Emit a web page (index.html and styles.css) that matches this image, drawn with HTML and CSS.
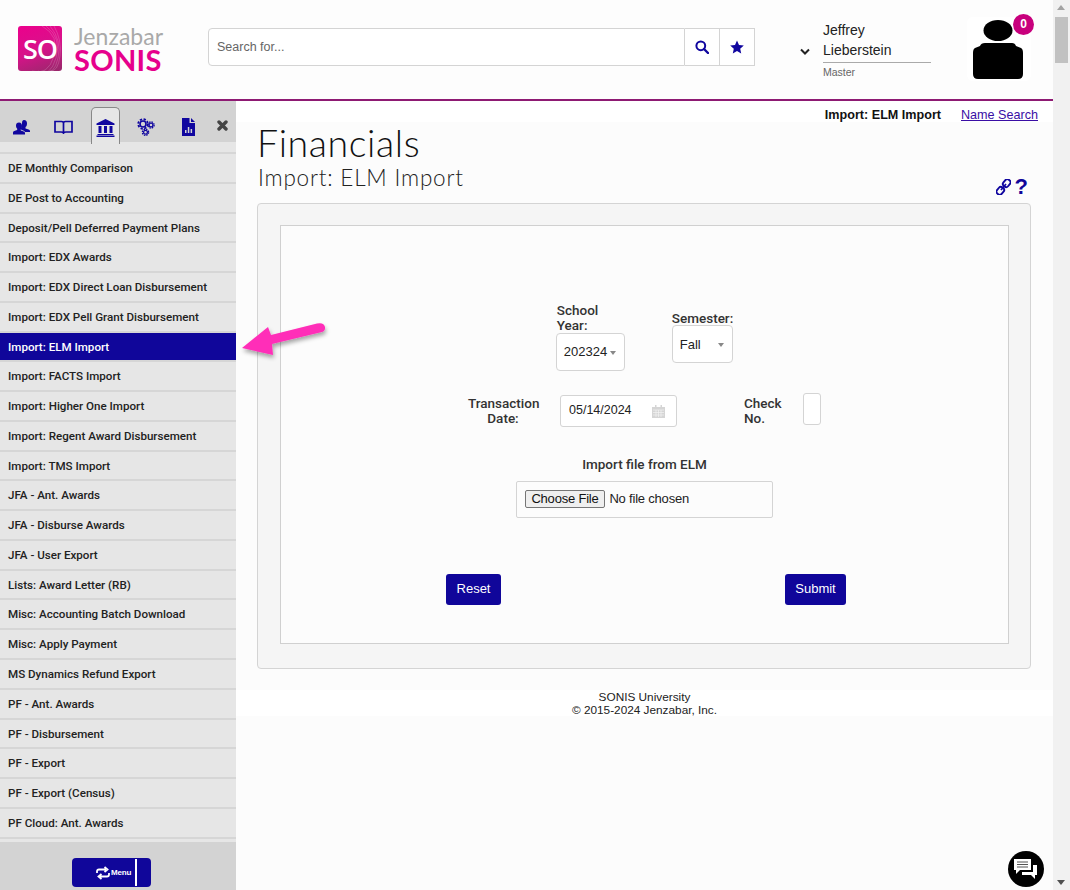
FILE: index.html
```html
<!DOCTYPE html>
<html lang="en">
<head>
  <meta charset="UTF-8" />
  <title>Import: ELM Import</title>
  <link rel="stylesheet" href="styles.css">
</head>
<body>
  <div class="page">
    <!-- TOP BAR -->
    <header class="top-bar">
      <div class="logo">
        <div class="logo-mark">
          <svg class="logo-swirl" width="44" height="45" viewBox="0 0 44 45"><g fill="none" stroke="#fff" stroke-opacity=".35" stroke-width=".5"><path d="M24 0q18 10 12 30T14 45"/><path d="M28 0q16 12 10 32T20 45"/><path d="M32 0q12 14 8 32T26 45"/><path d="M36 0q8 14 6 30T32 45"/></g></svg>
          <span>SO</span>
        </div>
        <div class="logo-words">
          <div class="logo-jenzabar">Jenzabar</div>
          <div class="logo-sonis">SONIS</div>
        </div>
      </div>
      <div class="search">
        <div class="search-input">Search for...</div>
        <div class="search-btn">
          <svg width="14" height="14" viewBox="0 0 14 14"><circle cx="5.8" cy="5.8" r="4.4" fill="none" stroke="#10069f" stroke-width="2"/><path d="M9 9l4 4" stroke="#10069f" stroke-width="2.4" stroke-linecap="round"/></svg>
        </div>
        <div class="search-btn star-btn">
          <svg width="14" height="14" viewBox="0 0 14 14"><path d="M7 .6l2 4.4 4.8.5-3.6 3.2 1 4.7L7 11l-4.2 2.4 1-4.7L.2 5.5 5 5z" fill="#10069f"/></svg>
        </div>
      </div>
      <div class="user">
        <svg class="user-caret" width="10" height="7" viewBox="0 0 10 7"><path d="M1 1.5l4 4 4-4" fill="none" stroke="#222" stroke-width="2"/></svg>
        <div class="user-info">
          <div class="user-name">Jeffrey<br>Lieberstein</div>
          <div class="user-role">Master</div>
        </div>
      </div>
      <div class="avatar">
        <svg width="64" height="64" viewBox="0 0 64 64"><ellipse cx="31" cy="13.500" rx="14.500" ry="10.500" fill="#000"/><path d="M18 26h27q3 0 4 3l5 2q2 1 2 5v21q0 5-5 5H11q-5 0-5-5V36q0-4 2-5l5-2q1-3 5-3z" fill="#000"/></svg>
        <span class="badge">0</span>
      </div>
    </header>

    <div class="layout">
      <!-- SIDE MENU -->
      <aside class="side-menu">
        <div class="tabs">
          <span class="tab tab-users">
            <svg width="18" height="16" viewBox="0 0 18 16"><path d="M11 1c2 0 3 1.500 3 3.500 0 1.500-.5 3-1.500 3.500v1.500c2 .5 4.500 1 4.500 2.500v1H12c-.5-1.500-3-2-4-2.500V9c1-1 1-3 1-4.500C9 2.500 9.500 1 11 1z" fill="#10069f"/><path d="M6 3.500c2 0 3 1.500 3 3.500 0 1.500-.5 2.500-1.200 3.200v1.300c2 .8 4.200 1 4.200 2.500v1.500H0V13.500c0-1.500 2.200-1.700 4.200-2.500v-1.300C3.500 9 3 8 3 6.500c0-1.800 1-3 3-3z" fill="#10069f"/></svg>
          </span>
          <span class="tab">
            <svg width="19" height="14" viewBox="0 0 19 14"><path d="M1 1.500h6.500q2 0 2 1.500 0-1.500 2-1.500H18v10.500h-6q-2 0-2.500 1-.5-1-2.500-1H1zM9.500 3v9" fill="none" stroke="#10069f" stroke-width="1.700"/></svg>
          </span>
          <span class="tab tab-on">
            <svg width="19" height="18" viewBox="0 0 19 18"><path d="M9.500 0L18.500 4.500V6H.5V4.500zM2.500 7h3v7h-3zM8 7h3v7H8zM13.500 7h3v7h-3zM1.500 15h16v1h-16zM.5 16.500h18V18H.5z" fill="#10069f"/></svg>
          </span>
          <span class="tab tab-gears">
            <svg width="18" height="18" viewBox="0 0 18 18"><g fill="none" stroke="#10069f"><circle cx="6" cy="6" r="3" stroke-width="1.600"/><circle cx="6" cy="6" r="4.800" stroke-width="1.800" stroke-dasharray="2.300 1.470"/><circle cx="14" cy="7" r="1.900" stroke-width="1.200"/><circle cx="14" cy="7" r="3.100" stroke-width="1.300" stroke-dasharray="1.500 .95"/><circle cx="8.500" cy="14.300" r="1.900" stroke-width="1.200"/><circle cx="8.500" cy="14.300" r="3.100" stroke-width="1.300" stroke-dasharray="1.500 .95"/></g></svg>
          </span>
          <span class="tab">
            <svg width="13" height="18" viewBox="0 0 13 18"><path d="M0 0h7.500v5H13v13H0zM9 0l4 4H9z" fill="#10069f"/><path d="M3 15v-3h1.500v3zM5.800 15v-6h1.500v6zM8.600 15v-4h1.500v4z" fill="#d3d3d3"/></svg>
          </span>
          <span class="tab tab-close">
            <svg width="11" height="11" viewBox="0 0 11 11"><path d="M2 2l7 7M9 2l-7 7" stroke="#444" stroke-width="3.400" stroke-linecap="round"/></svg>
          </span>
        </div>
        <div class="menu-list">
          <a href="#">DE Monthly Comparison</a>
          <a href="#">DE Post to Accounting</a>
          <a href="#">Deposit/Pell Deferred Payment Plans</a>
          <a href="#">Import: EDX Awards</a>
          <a href="#">Import: EDX Direct Loan Disbursement</a>
          <a href="#">Import: EDX Pell Grant Disbursement</a>
          <a href="#" class="active">Import: ELM Import</a>
          <a href="#">Import: FACTS Import</a>
          <a href="#">Import: Higher One Import</a>
          <a href="#">Import: Regent Award Disbursement</a>
          <a href="#">Import: TMS Import</a>
          <a href="#">JFA - Ant. Awards</a>
          <a href="#">JFA - Disburse Awards</a>
          <a href="#">JFA - User Export</a>
          <a href="#">Lists: Award Letter (RB)</a>
          <a href="#">Misc: Accounting Batch Download</a>
          <a href="#">Misc: Apply Payment</a>
          <a href="#">MS Dynamics Refund Export</a>
          <a href="#">PF - Ant. Awards</a>
          <a href="#">PF - Disbursement</a>
          <a href="#">PF - Export</a>
          <a href="#">PF - Export (Census)</a>
          <a href="#">PF Cloud: Ant. Awards</a>
        </div>
        <div class="menu-foot">
          <div class="menu-btn">
            <svg width="14" height="14" viewBox="0 0 14 14"><path d="M1 7V5.500Q1 3.500 3 3.500h7M8.500 1l3 2.500-3 2.500M13 7v1.500q0 2-2 2H4M5.500 8l-3 2.500 3 2.500" fill="none" stroke="#fff" stroke-width="1.800"/></svg>
            <span>Menu</span>
            <i class="menu-btn-bar"></i>
          </div>
        </div>
      </aside>

      <!-- CONTENT -->
      <main class="content">
        <div class="crumb-bar">
          <b>Import: ELM Import</b>
          <a href="#">Name Search</a>
        </div>
        <div class="content-body">
          <h1>Financials</h1>
          <div class="sub-row">
            <h2>Import: ELM Import</h2>
            <div class="sub-icons">
              <svg width="15" height="16" viewBox="0 0 15 16"><g fill="none" stroke="#10069f" stroke-width="1.900" transform="rotate(-50 7.500 8)"><rect x="-1.500" y="5" width="8" height="6" rx="2.500"/><rect x="8.500" y="5" width="8" height="6" rx="2.500"/></g><path d="M5 11l5-6" stroke="#10069f" stroke-width="1.700"/></svg>
              <span class="help">?</span>
            </div>
          </div>
          <div class="panel">
            <form class="inner">
              <div class="row row-one">
                <div class="field field-narrow">
                  <label>School Year:</label>
                  <div class="select sel-year"><span>202324</span><i class="caret"></i></div>
                </div>
                <div class="field">
                  <label>Semester:</label>
                  <div class="select sel-sem"><span>Fall</span><i class="caret"></i></div>
                </div>
              </div>
              <div class="row row-two">
                <label class="lbl-date">Transaction Date:</label>
                <div class="date-input"><span>05/14/2024</span>
                  <svg width="13" height="13" viewBox="0 0 13 13"><path d="M0 2h13v11H0z" fill="#d5d5d5"/><path d="M3 0h1.500v3H3zM8.500 0H10v3H8.500z" fill="#d5d5d5"/><path d="M1 5h11M1 7.500h11M1 10h11M4 5v7M6.500 5v7M9 5v7" stroke="#f4f4f4" stroke-width=".7"/></svg>
                </div>
                <label class="lbl-check">Check No.</label>
                <div class="check-input"></div>
              </div>
              <div class="row-file">
                <label>Import file from ELM</label>
                <div class="file-box"><span class="file-btn">Choose File</span> No file chosen</div>
              </div>
              <div class="row-actions">
                <button type="button" class="btn">Reset</button>
                <button type="button" class="btn">Submit</button>
              </div>
            </form>
          </div>
        </div>
        <footer>SONIS University<br>&copy; 2015-2024 Jenzabar, Inc.</footer>
      </main>
    </div>
  </div>

  <!-- fake page scrollbar -->
  <div class="scrollbar">
    <i class="sb-up"></i>
    <i class="sb-thumb"></i>
    <i class="sb-down"></i>
  </div>

  <!-- annotation arrow -->
  <svg class="arrow" width="100" height="50" viewBox="0 0 100 50">
    <defs><filter id="sh" x="-20%" y="-20%" width="140%" height="160%"><feDropShadow dx="1" dy="3" stdDeviation="2" flood-color="#000" flood-opacity=".35"/></filter></defs>
    <path d="M2 28L28 7l3 8L77 3.500Q84 2 85 7q.5 4-3 5L32 24l1 11z" fill="#ff2eb8" filter="url(#sh)"/>
  </svg>

  <!-- chat bubble -->
  <div class="chat">
    <svg width="26" height="24" viewBox="0 0 26 24"><path d="M1 1h17v11H7l-4 4v-4H1z" fill="#fff"/><path d="M4 4h11M4 6.500h11M4 9h11" stroke="#555" stroke-width="1"/><path d="M20 7h4v10h-2v4l-4-4H9v-3h11z" fill="#fff"/></svg>
  </div>
</body>
</html>
```

FILE: styles.css
```css
* {margin: 0; padding: 0; box-sizing: border-box;}
html, body {height: 100%; overflow: hidden;}
body {
  font-family: "Liberation Sans", Arial, sans-serif;
  background: #fcfcfc;
  color: #222;
}
.page {width: 1053px; height: 890px; display: flex; flex-direction: column;}

/* Top bar */
.top-bar {
  height: 101px; flex: none;
  display: flex; align-items: flex-start;
  background: #fdfdfd;
  border-bottom: 2px solid #8e1a73;
  position: relative;
}
.logo {display: flex; margin: 26px 0 0 18px; width: 190px; gap: 12px;}
.logo-mark {
  width: 44px; height: 45px; border-radius: 3px; position: relative;
  background: linear-gradient(160deg, #ec008c 0%, #d8128a 50%, #96296a 100%);
  color: #fff; font: 600 27px/45px "Open Sans", sans-serif; text-align: center; letter-spacing: -1px;
}
.logo-swirl {position: absolute; left: 0; top: 0;}
.logo-mark span {position: relative;}
.logo-words {margin-top: -1px;}
.logo-jenzabar {font: 400 23px/22px Lato, sans-serif; color: #a9a9a9; letter-spacing: .05px;}
.logo-sonis {font: 700 29px/26px Lato, sans-serif; color: #e6008c; letter-spacing: .3px;}

.search {display: flex; margin-top: 28px; height: 38px;}
.search-input {
  width: 477px; border: 1px solid #d4d4d4; border-radius: 4px 0 0 4px;
  font-size: 12.500px; line-height: 37px; padding-left: 8px; color: #666; background: #fff;
}
.search-btn {
  width: 35px; border: 1px solid #d4d4d4; border-left: 0; background: #fff;
  display: flex; align-items: center; justify-content: center;
}
.user {display: flex; margin: 20px 0 0 45px; width: 167px;}
.user-caret {margin: 28px 13px 0 0; flex: none;}
.user-info {width: 108px;}
.user-name {font-size: 14px; line-height: 20px; padding-bottom: 2px; border-bottom: 1px solid #aaa; color: #222;}
.user-role {font-size: 10.500px; color: #666; margin-top: 3px;}
.avatar {width: 64px; height: 64px; margin: 17px 0 0 0; background: #fff; border-radius: 6px; position: relative;}
.avatar svg {display: block;}
.badge {
  position: absolute; top: -3px; right: -3px;
  width: 21px; height: 21px; border-radius: 50%;
  background: #c8007d; color: #fff; font-size: 12px; font-weight: bold; line-height: 20px; text-align: center;
}

.layout {flex: 1; display: flex; min-height: 0;}

/* Side menu */
.side-menu {width: 236px; flex: none; display: flex; flex-direction: column; background: #e6e6e6;}
.tabs {height: 41px; background: #d3d3d3; flex: none; display: flex;}
.tab {width: 42px; height: 37px; display: flex; align-items: center; justify-content: center; margin-top: 6px; padding-top: 3px; flex: none;}
.tab-users svg {margin-left: 2px;}
.tab-on {
  width: 29px; margin: 6px 6px 0 7px; height: 37px;
  background: #e6e6e6;
  border: 1px solid #888; border-bottom: 0; border-radius: 5px 5px 0 0;
}
.tab-gears {margin-left: -1px;}
.tab-close {width: 26px; margin-top: 4px;}
.menu-list {flex: 1; padding-top: 12px; overflow: hidden; position: relative;}
.menu-list::before {content: ""; position: absolute; top: 10px; left: 0; right: 0; height: 2px; background: #d6d6d6;}
.menu-list a {
  display: block; height: 29.770px; padding-left: 8px;
  font-family: Roboto, sans-serif; font-size: 11.600px; font-weight: 500; line-height: 29.500px; color: #222; text-decoration: none;
  border-bottom: 2px solid #d6d6d6;
}
.menu-list a.active {background: #10069a; color: #fff;}
.menu-foot {height: 48px; background: #d3d3d3; flex: none; padding: 16px 0 0 72px;}
.menu-btn {
  width: 79px; height: 29px; background: #10069a; border-radius: 4px;
  display: flex; align-items: center; color: #fff; font-size: 8px; font-weight: bold; letter-spacing: -.2px; padding-left: 24px; gap: 1px;
}
.menu-btn-bar {width: 2px; height: 27px; background: #fff; margin-left: 3px;}

/* Content */
.content {flex: 1; display: flex; flex-direction: column; min-width: 0; background: #fcfcfc;}
.crumb-bar {height: 21px; background: #fff; flex: none; display: flex; justify-content: flex-end; gap: 20px; padding: 7px 15px 0 0; font-size: 12.600px;}
.crumb-bar b {color: #111;}
.crumb-bar a {color: #3a0ea5;}
.content-body {padding: 0 22px 0 21px; height: 568px; flex: none;}
h1 {font: 300 37.500px/42px Lato, sans-serif; color: #111; letter-spacing: .6px;}
.sub-row {display: flex; justify-content: space-between; height: 39px; padding: 2px 0 0 1px;}
h2 {font: 300 22.500px/24px Lato, sans-serif; color: #222; letter-spacing: .8px;}
.sub-icons {display: flex; align-items: center; gap: 4px; height: 20px; margin-top: 11px; padding-right: 3px;}
.help {font-size: 22px; font-weight: bold; color: #10069a; line-height: 20px;}
.panel {
  height: 466px; background: #f5f5f5; border: 1px solid #d4d4d4; border-radius: 4px;
  padding: 21px 21px 24px 22px;
}
.inner {
  height: 419px; width: 729px; background: #fcfcfc; border: 1px solid #d0d0d0;
  display: flex; flex-direction: column; align-items: center;
}
label {font-family: Roboto, sans-serif; font-weight: 500; color: #333; font-size: 13.500px; line-height: 15px; display: block;}
.row {display: flex; align-items: center; justify-content: center;}
.row-one {margin-top: 76px; gap: 47px;}
.row-one label {padding-top: 1px; margin-bottom: -1px;}
.field-narrow label {width: 60px; padding-left: 1px;}
.select {
  border: 1px solid #d4d4d4; border-radius: 4px; background: #fff; font-size: 13px;
  display: flex; align-items: center; height: 38px; position: relative;
}
.sel-year {width: 69px; padding: 0 0 1px 7px; margin-top: 1px;}
.sel-sem {width: 61px; padding-left: 7px;}
.caret {
  border: 3.500px solid transparent; border-top: 4px solid #888; border-bottom: 0;
  position: absolute; right: 8px; top: 17px;
}
.row-two {margin-top: 22px; align-items: flex-start;}
.lbl-date {width: 70px; text-align: center; margin-top: 3px;}
.date-input {
  width: 117px; height: 32px; margin: 2px 67px 0 22px;
  border: 1px solid #d4d4d4; border-radius: 3px; background: #fff;
  display: flex; align-items: center; justify-content: space-between; padding: 0 11px 0 8px; font-size: 12.500px;
}
.date-input span {padding-bottom: 2px;}
.lbl-check {width: 38px; margin-top: 3px;}
.check-input {width: 18px; height: 32px; margin-left: 21px; border: 1px solid #d4d4d4; border-radius: 3px; background: #fff;}
.row-file {margin-top: 30px; text-align: center;}
.row-file label {margin-bottom: 9px;}
.file-box {
  width: 257px; height: 37px; border: 1px solid #d4d4d4; border-radius: 2px;
  font-size: 13px; letter-spacing: -.2px; padding: 8px 0 0 8px; text-align: left;
}
.file-btn {
  display: inline-block; width: 80px; height: 18px; line-height: 16px; text-align: center;
  background: #efefef; border: 1px solid #767676; border-radius: 2px; color: #111; margin-right: 1px;
}
.row-actions {display: flex; justify-content: space-between; margin: 56px 0 0 3px; width: 400px;}
.btn {
  height: 31px; width: 55px; border: 0; border-radius: 3px; padding-bottom: 2px;
  background: #10069a; color: #fff; font-size: 13px; font-family: inherit;
}
.btn:last-child {width: 61px;}
footer {height: 26px; background: #fff; text-align: center; font-size: 11.800px; line-height: 13px; padding-top: 1px; color: #222;}

/* Scrollbar */
.scrollbar {position: absolute; top: 0; right: 0; bottom: 0; width: 17px; background: #f1f1f1;}
.sb-up, .sb-down {position: absolute; left: 4px; border: 4px solid transparent;}
.sb-up {top: 5px; border-bottom: 5px solid #a3a3a3; border-top: 0;}
.sb-down {bottom: 5px; border-top: 5px solid #505050; border-bottom: 0;}
.sb-thumb {position: absolute; left: 2px; top: 17px; width: 13px; height: 46px; background: #c1c1c1;}

.arrow {position: absolute; left: 240px; top: 320px; overflow: visible;}
.chat {
  position: absolute; left: 1008px; top: 851px; width: 36px; height: 36px; border-radius: 50%;
  background: #000; display: flex; align-items: center; justify-content: center; padding-top: 2px;
}
```
